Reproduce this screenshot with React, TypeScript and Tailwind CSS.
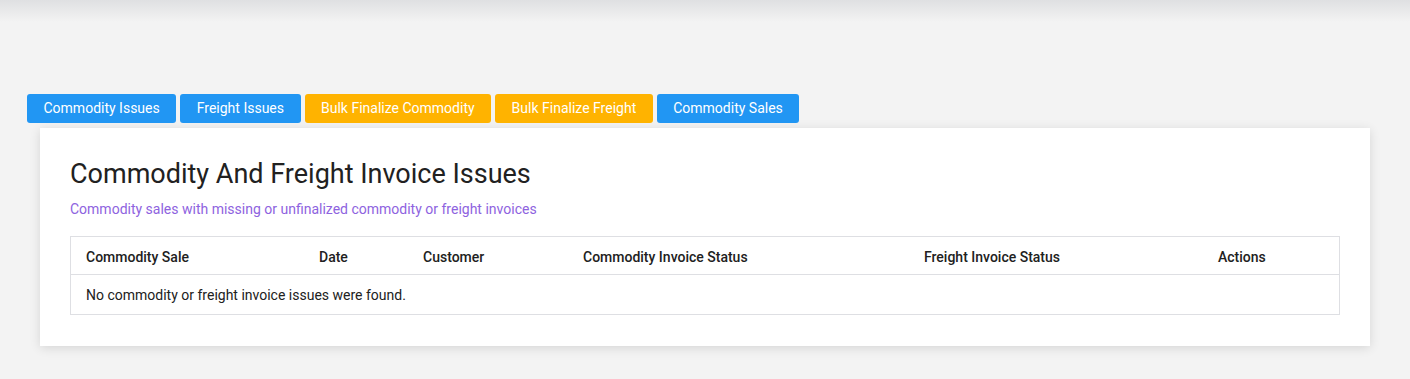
import React from 'react';

const tabs = [
    { label: 'Commodity Issues', color: 'bg-[#2196f3]' },
    { label: 'Freight Issues', color: 'bg-[#2196f3]' },
    { label: 'Bulk Finalize Commodity', color: 'bg-[#ffb300]' },
    { label: 'Bulk Finalize Freight', color: 'bg-[#ffb300]' },
    { label: 'Commodity Sales', color: 'bg-[#2196f3]' },
];

const columns = ['Commodity Sale', 'Date', 'Customer', 'Commodity Invoice Status', 'Freight Invoice Status', 'Actions'];

const App: React.FC = () => {
    return (
        <div className="min-h-[379px] bg-[#f3f3f3] font-['Roboto',sans-serif] text-[#212121]">
            {/* shadow of the navbar above */}
            <div className="h-[22px] bg-gradient-to-b from-[#dfe0e2] to-[#f3f3f3]"></div>

            <div className="flex gap-[4px] pl-[27px] mt-[72px]">
                {tabs.map(t => (
                    <button
                        key={t.label}
                        className={`${t.color} h-[29px] px-[16.5px] rounded-[3px] text-white text-[14px] leading-[29px]`}
                    >
                        {t.label}
                    </button>
                ))}
            </div>

            <div className="ml-[40px] mt-[5px] w-[1330px] bg-white shadow-[0_2px_10px_rgba(0,0,0,0.12)] px-[30px] pt-[29px] pb-[31px]">
                <h2 className="text-[27px] leading-[34px] font-normal text-[#212121]">Commodity And Freight Invoice Issues</h2>
                <p className="mt-[8px] text-[14px] leading-[20px] text-[#8e63e0]">
                    Commodity sales with missing or unfinalized commodity or freight invoices
                </p>

                <div className="mt-[17px] border border-[#dedfe3] text-[14px]">
                    <div className="grid grid-cols-[233px_104px_160px_341px_294px_1fr] h-[38px] pt-[3px] items-center border-b border-[#dedfe3] font-medium">
                        {columns.map(c => (
                            <div key={c} className="pl-[15px]">{c}</div>
                        ))}
                    </div>
                    <div className="h-[39px] pt-[2px] flex items-center pl-[15px]">
                        No commodity or freight invoice issues were found.
                    </div>
                </div>
            </div>
        </div>
    );
};

export default App;
